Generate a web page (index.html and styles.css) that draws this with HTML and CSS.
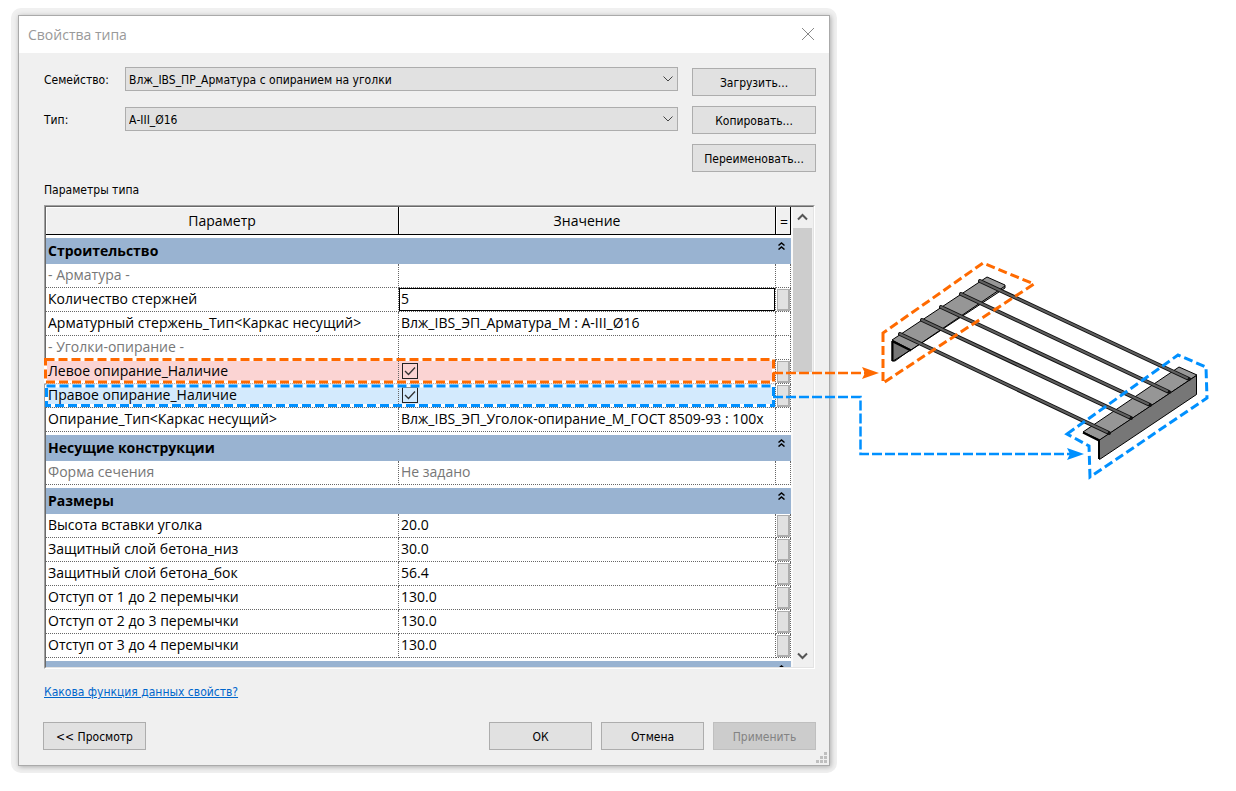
FILE: index.html
```html
<!DOCTYPE html>
<html lang="ru">
<head>
<meta charset="utf-8">
<title>Свойства типа</title>
<link rel="stylesheet" href="styles.css">
</head>
<body>
<main class="stage">
  <div class="halo">
  <section class="dialog" aria-labelledby="dialog-title">
    <header class="titlebar">
      <h1 class="title" id="dialog-title">Свойства типа</h1>
      <button class="close" type="button" aria-label="Закрыть">
        <svg width="14" height="14" viewBox="0 0 14 14"><path d="M1 1L13 13M13 1L1 13"/></svg>
      </button>
    </header>
    <div class="content">
      <div class="selectors">
        <div class="fields">
          <label class="label" for="family">Семейство:</label>
          <div class="combo">
            <select id="family" class="select"><option>Влж_IBS_ПР_Арматура с опиранием на уголки</option></select>
            <svg class="chevron" width="10" height="6" viewBox="0 0 10 6"><path d="M.5 .5L5 5L9.500 .5"/></svg>
          </div>
          <label class="label" for="type">Тип:</label>
          <div class="combo">
            <select id="type" class="select"><option>А-III_Ø16</option></select>
            <svg class="chevron" width="10" height="6" viewBox="0 0 10 6"><path d="M.5 .5L5 5L9.500 .5"/></svg>
          </div>
        </div>
        <div class="actions">
          <button class="button" type="button">Загрузить...</button>
          <button class="button" type="button">Копировать...</button>
          <button class="button" type="button">Переименовать...</button>
        </div>
      </div>
      <h2 class="caption">Параметры типа</h2>
      <div class="grid-frame">
        <div class="grid-view">
          <table class="grid">
            <colgroup><col class="col-name"><col class="col-value"><col class="col-more"></colgroup>
            <thead>
              <tr><th>Параметр</th><th>Значение</th><th class="equals">=</th></tr>
            </thead>
            <tbody>
              <tr class="band"><th colspan="3"><div class="band-row">Строительство<svg class="fold" width="7" height="8" viewBox="0 0 7 8"><path d="M.5 3.500L3.500 1L6.500 3.500M.5 7.500L3.500 5L6.500 7.500"/></svg></div></th></tr>
              <tr class="muted"><td>- Арматура -</td><td></td><td></td></tr>
              <tr><td id="count">Количество стержней</td><td class="edit"><input class="input" type="text" value="5" aria-labelledby="count"></td><td class="more"><button class="browse" type="button" aria-label="Связать параметр"></button></td></tr>
              <tr><td>Арматурный стержень_Тип&lt;Каркас несущий&gt;</td><td>Влж_IBS_ЭП_Арматура_М : А-III_Ø16</td><td></td></tr>
              <tr class="muted"><td>- Уголки-опирание -</td><td></td><td></td></tr>
              <tr class="left-support"><td><label for="left">Левое опирание_Наличие</label></td><td><input class="check" id="left" type="checkbox" checked></td><td class="more"><button class="browse" type="button" aria-label="Связать параметр"></button></td></tr>
              <tr class="right-support"><td><label for="right">Правое опирание_Наличие</label></td><td><input class="check" id="right" type="checkbox" checked></td><td class="more"><button class="browse" type="button" aria-label="Связать параметр"></button></td></tr>
              <tr><td>Опирание_Тип&lt;Каркас несущий&gt;</td><td>Влж_IBS_ЭП_Уголок-опирание_М_ГОСТ 8509-93 : 100x</td><td></td></tr>
              <tr class="band"><th colspan="3"><div class="band-row">Несущие конструкции<svg class="fold" width="7" height="8" viewBox="0 0 7 8"><path d="M.5 3.500L3.500 1L6.500 3.500M.5 7.500L3.500 5L6.500 7.500"/></svg></div></th></tr>
              <tr class="muted"><td>Форма сечения</td><td>Не задано</td><td></td></tr>
              <tr class="band"><th colspan="3"><div class="band-row">Размеры<svg class="fold" width="7" height="8" viewBox="0 0 7 8"><path d="M.5 3.500L3.500 1L6.500 3.500M.5 7.500L3.500 5L6.500 7.500"/></svg></div></th></tr>
              <tr><td>Высота вставки уголка</td><td>20.0</td><td class="more"><button class="browse" type="button" aria-label="Связать параметр"></button></td></tr>
              <tr><td>Защитный слой бетона_низ</td><td>30.0</td><td class="more"><button class="browse" type="button" aria-label="Связать параметр"></button></td></tr>
              <tr><td>Защитный слой бетона_бок</td><td>56.4</td><td class="more"><button class="browse" type="button" aria-label="Связать параметр"></button></td></tr>
              <tr><td>Отступ от 1 до 2 перемычки</td><td>130.0</td><td class="more"><button class="browse" type="button" aria-label="Связать параметр"></button></td></tr>
              <tr><td>Отступ от 2 до 3 перемычки</td><td>130.0</td><td class="more"><button class="browse" type="button" aria-label="Связать параметр"></button></td></tr>
              <tr><td>Отступ от 3 до 4 перемычки</td><td>130.0</td><td class="more"><button class="browse" type="button" aria-label="Связать параметр"></button></td></tr>
              <tr class="band"><th colspan="3"><div class="band-row"><svg class="fold" width="7" height="8" viewBox="0 0 7 8"><path d="M.5 3.500L3.500 1L6.500 3.500M.5 7.500L3.500 5L6.500 7.500"/></svg></div></th></tr>
            </tbody>
          </table>
        </div>
        <div class="scrollbar">
          <svg class="scroll-arrow" width="11" height="8" viewBox="0 0 11 8"><path d="M1 6.500L5.500 2L10 6.500"/></svg>
          <div class="thumb"></div>
          <svg class="scroll-arrow scroll-down" width="11" height="8" viewBox="0 0 11 8"><path d="M1 1.500L5.500 6L10 1.500"/></svg>
        </div>
      </div>
      <a class="link" href="#">Какова функция данных свойств?</a>
      <footer class="footer">
        <button class="button" type="button">&lt;&lt; Просмотр</button>
        <div class="footer-main">
          <button class="button" type="button">ОК</button>
          <button class="button" type="button">Отмена</button>
          <button class="button" type="button" disabled>Применить</button>
        </div>
      </footer>
    </div>
    <svg class="grip" width="11" height="11" viewBox="0 0 11 11"><path d="M8 0h3v3h-3zM4 4h3v3h-3zM8 4h3v3h-3zM0 8h3v3h-3zM4 8h3v3h-3zM8 8h3v3h-3z"/></svg>
  </section>
  </div>

  <svg class="callouts" width="1236" height="791" viewBox="0 0 1236 791" aria-hidden="true">
    <g stroke="#000" stroke-width="1" stroke-linejoin="round">
      <path fill="#777" d="M892 341L910 350L895 361H892Z"/>
      <path fill="#969696" d="M892 340L987 277L1005 285V288L911 350Z"/>
      <path fill="none" stroke-width="2" d="M892.500 341V361M892 341L911 350.500"/>
      <path fill="none" d="M1005 286L911 350L893 361"/>
      <path fill="#969696" d="M1083 432L1179 367L1197 375L1100 440Z"/>
      <path fill="#777" d="M1099.500 440L1196.500 375.500V394.500L1099.500 459.500Z"/>
      <path fill="none" stroke-width="2" d="M1083 432.500L1099 440.500V459"/>
    </g>
    <g stroke-linecap="round" fill="none">
      <path stroke="#111" stroke-width="4" d="M980 281L1189 379M961 294L1169 392M941 307L1150 405M922 320L1131 418M900 334L1109 433"/>
      <path stroke="#606060" stroke-width="2" d="M980 281L1187 378M961 294L1167 391M941 307L1148 404M922 320L1129 417M900 334L1107 432"/>
    </g>
    <g fill="none" stroke="#ff6a00" stroke-width="3">
      <path stroke="#fff" d="M45.500 359.500H773.500V382H45.500Z"/>
      <path stroke-dasharray="9 4" d="M45.500 359.500H773.500V382H45.500Z"/>
      <path stroke-dasharray="9 4" d="M883 333V383L1034 284L983 263Z"/>
      <path stroke-dasharray="10 3" stroke-width="2.500" d="M773 373H866"/>
      <path stroke="none" fill="#ff6a00" d="M862 367L879 373L862 379L865 373Z"/>
    </g>
    <g fill="none" stroke="#0090ff" stroke-width="3">
      <path stroke="#fff" d="M46.500 386H773.500V405.500H46.500Z"/>
      <path stroke-dasharray="9 4" d="M46.500 386H773.500V405.500H46.500Z"/>
      <path stroke-dasharray="9 4" d="M1067 434L1178 355L1206 367L1207 398L1090 477L1089 446Z"/>
      <path stroke-dasharray="10 3" stroke-width="2.500" d="M773 397H860.500V454H1070"/>
      <path stroke="none" fill="#0090ff" d="M1067 448L1084 454L1067 460L1070 454Z"/>
    </g>
  </svg>
</main>
</body>
</html>
```
FILE: styles.css
```css
* { box-sizing: border-box; }

body {
  margin: 0;
  background: #fff;
  color: #000;
  font-family: "DejaVu Sans Condensed", "DejaVu Sans", sans-serif;
  font-size: 12px;
}

button, select, input { font: inherit; color: inherit; margin: 0; }

.stage {
  position: relative;
  min-height: 100vh;
  padding: 8px 11px 18px;
  overflow: hidden;
}

.halo {
  width: 100%;
  max-width: 826px;
  padding: 7px;
  border-radius: 10px;
  background: #f0f0f0;
  overflow: hidden;
}

.dialog {
  position: relative;
  display: flex;
  flex-direction: column;
  height: calc(100vh - 40px);
  min-height: 640px;
  border: 1px solid #aaa;
  background: #f0f0f0;
  box-shadow: 1px 1px 5px #aaa;
}

.titlebar {
  display: flex;
  align-items: center;
  justify-content: space-between;
  flex: none;
  height: 37px;
  padding: 0 14px 0 9px;
  background: #fff;
}

.title {
  margin: 0;
  color: #999;
  font: 400 14px/20px "Open Sans", "Noto Sans", sans-serif;
}

.close {
  display: flex;
  padding: 0 0 1px;
  border: 0;
  background: none;
}

.close svg { fill: none; stroke: #888; }

.content {
  display: flex;
  flex-direction: column;
  flex: 1;
  min-height: 0;
  padding: 14px 13px 15px 25px;
}

.selectors {
  display: flex;
  gap: 14px;
  flex: none;
}

.fields {
  display: grid;
  grid-template-columns: 81px 1fr;
  grid-auto-rows: 24px;
  row-gap: 16px;
  flex: 1;
  align-items: center;
}

.label { padding-top: 2px; }

.combo { position: relative; }

.select {
  display: block;
  width: 100%;
  height: 24px;
  padding: 2px 24px 0 3px;
  border: 1px solid #adadad;
  border-radius: 0;
  background: #e1e1e1;
  appearance: none;
}

.chevron {
  position: absolute;
  top: 9px;
  right: 5px;
  fill: none;
  stroke: #444;
  pointer-events: none;
}

.actions {
  display: flex;
  flex-direction: column;
  gap: 10px;
  width: 124px;
  padding-top: 1px;
}

.button {
  height: 28px;
  padding: 2px 0 0;
  border: 1px solid #adadad;
  background: #e1e1e1;
}

.button:disabled {
  border-color: #bfbfbf;
  background: #ccc;
  color: #838383;
}

.caption {
  flex: none;
  margin: 10px 0 7px;
  font-size: 12px;
  font-weight: 400;
  line-height: 16px;
}

.grid-frame {
  display: flex;
  flex: 1;
  min-height: 0;
  margin-right: 1px;
  border: 1px solid;
  border-color: #a0a0a0 #fff #fff #a0a0a0;
}

.grid-view {
  flex: 1;
  min-width: 0;
  overflow: hidden;
  border: solid #696969;
  border-width: 1px 0 0 1px;
  border-bottom: 1px solid #e3e3e3;
  background: #fff;
}

.grid {
  width: 100%;
  table-layout: fixed;
  border-collapse: separate;
  border-spacing: 0;
  font: 400 14px/20px "Open Sans", "Noto Sans", sans-serif;
}

.col-name { width: 353px; }
.col-more { width: 15px; }

.grid thead th {
  height: 28px;
  padding: 0;
  border: solid #000;
  border-width: 0 1px 1px 0;
  background: #f0f0f0;
  box-shadow: inset 1px 1px #fff;
  font-weight: 400;
}

.grid thead .equals { padding: 2px 0 0 2px; }

.grid td {
  height: 24px;
  padding: 0 0 2px 2px;
  border: dotted #666;
  border-width: 0 1px 1px 0;
  white-space: nowrap;
  overflow: hidden;
}

.grid .muted { color: #777; }

.grid .band th {
  height: 29px;
  padding: 0 6px 0 2px;
  border-top: 3px solid #fff;
  background: #99b3d1;
  font-weight: 700;
  text-align: left;
}

.band-row {
  display: flex;
  justify-content: space-between;
  height: 20px;
}

.fold {
  margin: 1px 0 0 auto;
  fill: none;
  stroke: #000;
  stroke-width: 1.5;
}

.grid .edit { padding: 0; }

.input {
  display: block;
  width: 100%;
  height: 23px;
  padding: 0 1px 2px;
  border: 1px solid #000;
  background: #fff;
}

.grid .more { padding: 0 0 0 1px; background: #fff; }

.browse {
  display: block;
  width: 13px;
  height: 22px;
  padding: 0;
  border: solid #adadad;
  border-width: 1px 2px 2px 1px;
  background: #e1e1e1;
}

.left-support { background: #fbd4d3; }
.right-support { background: #d3eafd; }

.check {
  display: block;
  width: 16px;
  height: 16px;
  margin: 1px 0 0 1px;
  appearance: none;
  border: 1px solid #222;
  background: url("data:image/svg+xml,%3Csvg xmlns='http://www.w3.org/2000/svg' viewBox='0 0 14 14'%3E%3Cpath d='M2 7l3.500 3.500L12 3.500' fill='none' stroke='%23333' stroke-width='1.300'/%3E%3C/svg%3E") center / 14px 14px;
}

.scrollbar {
  display: flex;
  flex-direction: column;
  align-items: center;
  width: 23px;
  padding: 6px 1px 7px 2px;
  border: solid #e3e3e3;
  border-width: 0 1px 1px 0;
  border-top: 1px solid #696969;
  background: #f0f0f0;
  box-shadow: inset 2px 0 #fafafa;
}

.thumb {
  align-self: stretch;
  height: 144px;
  margin-top: 7px;
  background: #cdcdcd;
}

.scroll-arrow { flex: none; fill: none; stroke: #555; stroke-width: 2; }
.scroll-down { margin-top: auto; }

.link {
  align-self: flex-start;
  margin: 15px 0 21px;
  color: #0066cc;
  line-height: 17px;
}

.footer {
  display: flex;
  justify-content: space-between;
  flex: none;
  margin-left: -1px;
}

.footer-main { display: flex; gap: 9px; }
.footer .button { width: 103px; }

.grip {
  position: absolute;
  right: 2px;
  bottom: 2px;
  fill: #bfbfbf;
}

.callouts {
  position: absolute;
  top: 0;
  left: 0;
  pointer-events: none;
}
```
